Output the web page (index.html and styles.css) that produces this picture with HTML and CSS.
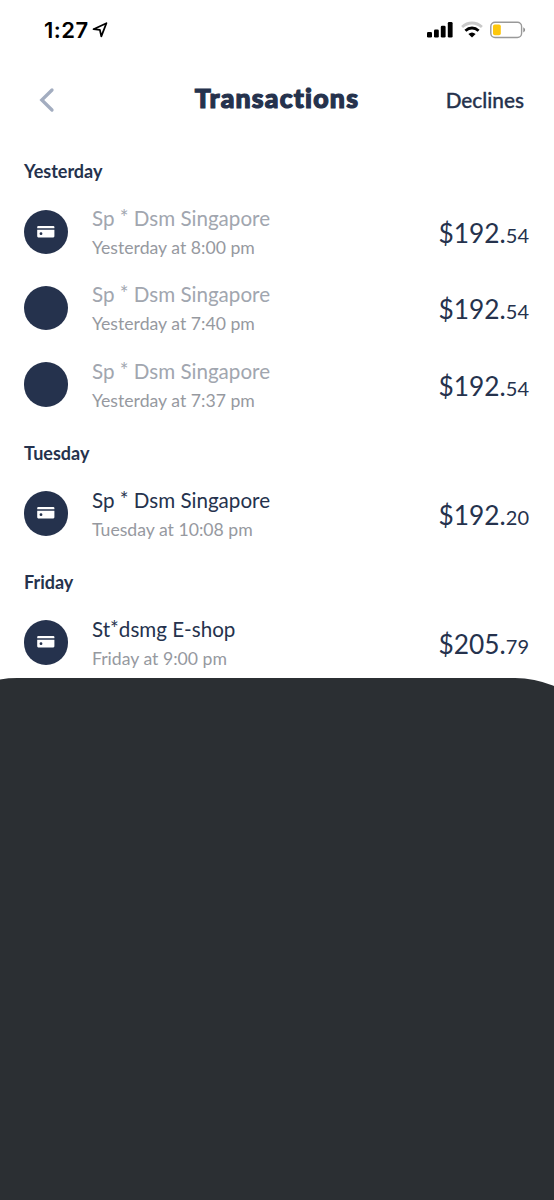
FILE: index.html
```
<!DOCTYPE html>
<html lang="en">
<head>
<meta charset="utf-8">
<title>Transactions</title>
<link rel="stylesheet" href="styles.css">
</head>
<body>
<svg class="defs" width="0" height="0" aria-hidden="true">
  <symbol id="card" viewBox="0 0 18 12">
    <path fill="#fff" d="M1.2 0H16.3Q17.4 0 17.4 1.1V2.3H.2V1.1Q.2 0 1.2 0ZM.2 3.8H17.4V10.3Q17.4 11.4 16.3 11.4H1.2Q.2 11.4 .2 10.3Z"/>
    <circle cx="4" cy="7.7" r="1.4" fill="#25324d"/>
  </symbol>
</svg>
<header class="status">
  <div class="clock">
    <span class="time">1:27</span>
    <svg width="16" height="16" viewBox="0 0 16 16"><path d="M14.4 1.2 1.5 7.2 7.9 7.9 9.3 14.4Z" fill="none" stroke="#000" stroke-width="1.8" stroke-linejoin="round"/></svg>
  </div>
  <div class="indicators">
    <svg width="26" height="17" viewBox="0 0 26 17"><rect x="0" y="11" width="5" height="5.5" rx="1.3"/><rect x="7" y="8.4" width="4.8" height="8.1" rx="1.3"/><rect x="13.8" y="4.8" width="4.8" height="11.7" rx="1.3"/><rect x="20.8" y="1" width="4.8" height="15.5" rx="1.3"/></svg>
    <svg class="wifi" width="22" height="17" viewBox="0 0 22 17" fill="none" stroke="#000" stroke-width="2.8"><path d="M1.1 6.1Q5.5 2 11 2T20.9 6.1" stroke="#c9c9c9"/><path d="M4.4 9.8Q7.4 7 11 7T17.6 9.8"/><path d="M7.4 13Q11 9.8 14.6 13L11 16.6Z" fill="#000" stroke="none"/></svg>
    <svg class="battery" width="36" height="18" viewBox="0 0 36 18"><rect x=".8" y="1.3" width="30.8" height="15.2" rx="4.2" fill="#fff" stroke="#999" stroke-width="1.4"/><rect x="3" y="3.5" width="7.8" height="10.8" rx="1.8" fill="#fdc70c"/><path d="M33.3 6.2Q37 8.9 33.3 11.6Z" fill="#888"/></svg>
  </div>
</header>
<nav class="nav">
  <svg class="back" width="18" height="26" viewBox="0 0 18 26"><path d="M14 3 3.8 13 14 23" fill="none" stroke="#a3adc0" stroke-width="3.3" stroke-linecap="round"/></svg>
  <h1 class="title">Transactions</h1>
  <a class="declines">Declines</a>
</nav>
<main class="list">
  <h2 class="day">Yesterday</h2>
  <article class="row muted"><span class="avatar"><svg width="18" height="12"><use href="#card"/></svg></span><div class="info"><p class="name">Sp <span class="star">*</span> Dsm Singapore</p><p class="when">Yesterday at 8:00 pm</p></div><p class="price">$192.<small>54</small></p></article>
  <article class="row muted"><span class="avatar"></span><div class="info"><p class="name">Sp <span class="star">*</span> Dsm Singapore</p><p class="when">Yesterday at 7:40 pm</p></div><p class="price">$192.<small>54</small></p></article>
  <article class="row muted"><span class="avatar"></span><div class="info"><p class="name">Sp <span class="star">*</span> Dsm Singapore</p><p class="when">Yesterday at 7:37 pm</p></div><p class="price">$192.<small>54</small></p></article>
  <h2 class="day">Tuesday</h2>
  <article class="row"><span class="avatar"><svg width="18" height="12"><use href="#card"/></svg></span><div class="info"><p class="name">Sp <span class="star">*</span> Dsm Singapore</p><p class="when">Tuesday at 10:08 pm</p></div><p class="price">$192.<small>20</small></p></article>
  <h2 class="day">Friday</h2>
  <article class="row"><span class="avatar"><svg width="18" height="12"><use href="#card"/></svg></span><div class="info"><p class="name">St<span class="star">*</span>dsmg E-shop</p><p class="when">Friday at 9:00 pm</p></div><p class="price">$205.<small>79</small></p></article>
</main>
<section class="sheet"></section>
</body>
</html>
```
FILE: styles.css
```
* { box-sizing: border-box; margin: 0; padding: 0; }
body {
  height: 1200px;
  display: flex;
  flex-direction: column;
  background: #fff;
  color: #25324d;
  font-family: Lato, "Liberation Sans", sans-serif;
}
.defs { display: none; }
svg { display: block; flex: none; }
.status {
  height: 58px;
  flex: none;
  display: flex;
  justify-content: space-between;
  align-items: center;
  padding: 1px 28px 0 44px;
  color: #000;
}
.clock { display: flex; align-items: center; gap: 3.5px; }
.time { font: 600 22px/28px Inter, sans-serif; letter-spacing: .5px; }
.indicators { display: flex; align-items: center; }
.wifi { margin-left: 8px; }
.battery { margin-left: 7px; }
.nav {
  height: 83px;
  flex: none;
  display: grid;
  grid-template-columns: 1fr auto 1fr;
  align-items: center;
  padding: 0 30px;
}
.back { margin-left: 8px; }
.title {
  margin-top: -4px;
  font: 900 26.7px/32px Lato, sans-serif;
  letter-spacing: 1.2px;
  -webkit-text-stroke: 1.2px #25324d;
}
.declines {
  justify-self: end;
  font-size: 20.8px;
  font-weight: 500;
  line-height: 26px;
  -webkit-text-stroke: .3px #25324d;
}
.list { height: 537px; flex: none; padding: 0 25px 0 24px; }
.day { height: 52.7px; padding-top: 18px; font-size: 18px; line-height: 25px; font-weight: 700; }
.row { height: 76.3px; display: flex; align-items: center; }
.avatar {
  width: 44.4px;
  height: 44.4px;
  flex: none;
  display: flex;
  align-items: center;
  justify-content: center;
  border-radius: 50%;
  background: #25324d;
}
.info { flex: 1; margin-left: 23.6px; padding-top: 2.6px; }
.name { font-size: 20.6px; line-height: 29px; }
.star { line-height: 1; vertical-align: 1px; }
.when { font-size: 17.65px; line-height: 29px; color: #96999f; }
.muted .name { color: #a1a6af; }
.price { font-size: 26.3px; line-height: 34px; padding-top: 4.4px; }
.price small { font-size: 20px; }
.sheet {
  flex: 1;
  background: #2b2f33;
  clip-path: inset(0 -60px 0 -82px round 99px 99px 0 0);
}
```
